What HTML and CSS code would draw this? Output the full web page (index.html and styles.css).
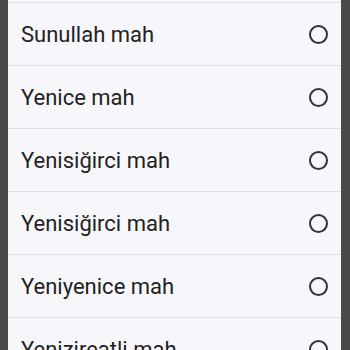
FILE: index.html
```html
<!DOCTYPE html>
<html lang="tr">
<head>
    <meta charset="UTF-8">
    <meta name="viewport" content="width=device-width, initial-scale=1.0">
    <title>Mahalle seç</title>
    <link rel="stylesheet" href="styles.css">
</head>
<body>
    <section class="picker">
        <ul class="option-list">
            <li class="option"><span class="label">Sultaniye mah</span><span class="radio"></span></li>
            <li class="option"><span class="label">Sunullah mah</span><span class="radio"></span></li>
            <li class="option"><span class="label">Yenice mah</span><span class="radio"></span></li>
            <li class="option"><span class="label">Yenisiğirci mah</span><span class="radio"></span></li>
            <li class="option"><span class="label">Yenisiğirci mah</span><span class="radio"></span></li>
            <li class="option"><span class="label">Yeniyenice mah</span><span class="radio"></span></li>
            <li class="option"><span class="label">Yenizireatli mah</span><span class="radio"></span></li>
        </ul>
    </section>
</body>
</html>
```

FILE: styles.css
```css
html, body {
    margin: 0;
    height: 100%;
    overflow: hidden;
    background-color: #4a4a4a;
}
.picker {
    margin: -60px 9px 0 8px;
    background-color: #f7f7fb;
    font-family: Roboto, "Noto Sans", sans-serif;
}
.option-list {
    list-style: none;
    margin: 0;
    padding: 0;
}
.option {
    display: flex;
    align-items: center;
    justify-content: space-between;
    height: 62px;
    padding: 0 13px 0 13px;
    border-bottom: 1px solid #e0e0e4;
}
.label {
    font-size: 22px;
    color: #222222;
}
.radio {
    width: 15px;
    height: 15px;
    border: 2px solid #333333;
    border-radius: 50%;
}
```
